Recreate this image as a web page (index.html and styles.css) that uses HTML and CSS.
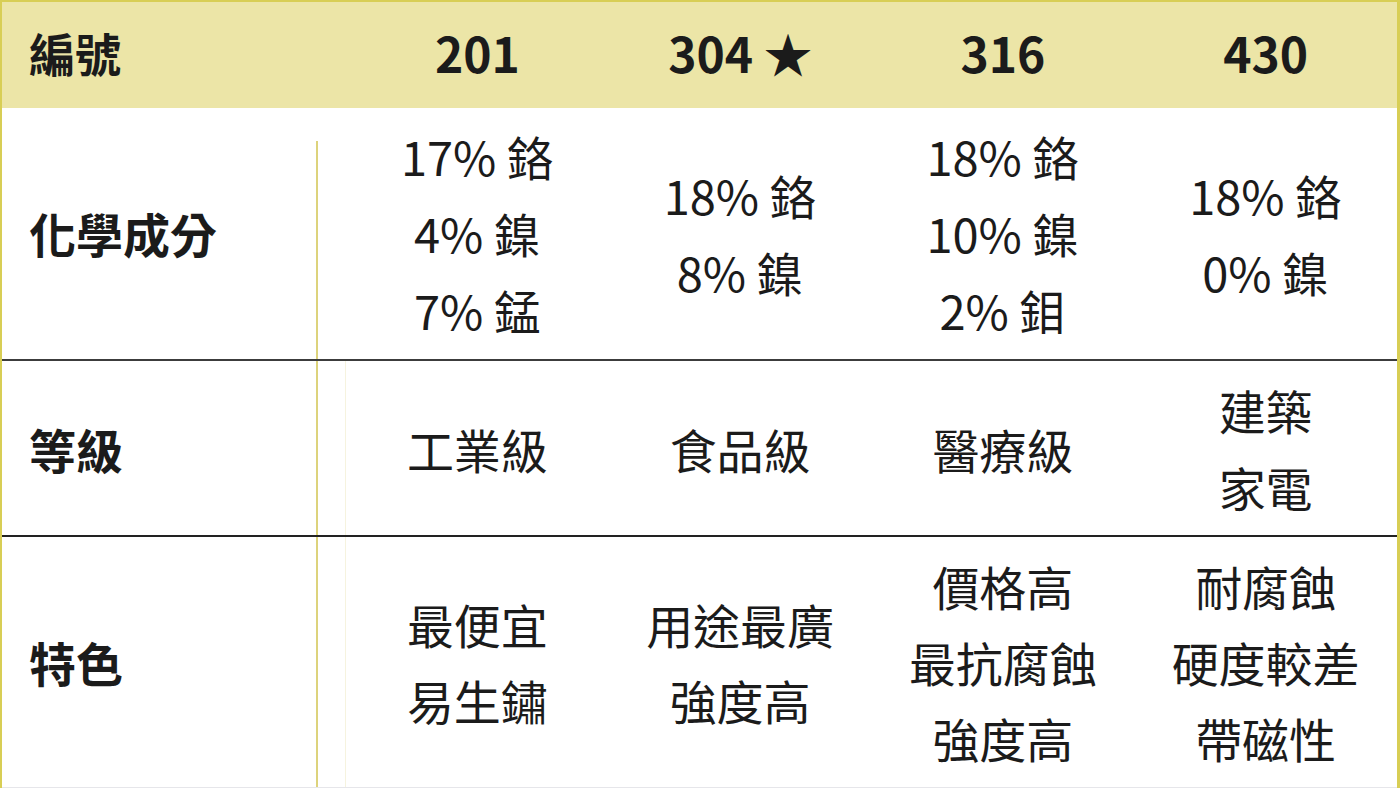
FILE: index.html
```html
<!DOCTYPE html>
<html lang="zh-Hant">
<head>
<meta charset="utf-8">
<title>不鏽鋼編號比較</title>
<link rel="stylesheet" href="styles.css">
</head>
<body>
<div class="sheet">
  <div class="row head">
    <div class="cell label">編號</div>
    <div class="gap"></div>
    <div class="cell">201</div>
    <div class="cell">304 ★</div>
    <div class="cell">316</div>
    <div class="cell">430</div>
  </div>
  <div class="row r1">
    <div class="cell label">化學成分</div>
    <div class="gap"></div>
    <div class="cell"><div>17% 鉻</div><div>4% 鎳</div><div>7% 錳</div></div>
    <div class="cell"><div>18% 鉻</div><div>8% 鎳</div></div>
    <div class="cell"><div>18% 鉻</div><div>10% 鎳</div><div>2% 鉬</div></div>
    <div class="cell"><div>18% 鉻</div><div>0% 鎳</div></div>
  </div>
  <div class="row r2">
    <div class="cell label">等級</div>
    <div class="gap"></div>
    <div class="cell"><div>工業級</div></div>
    <div class="cell"><div>食品級</div></div>
    <div class="cell"><div>醫療級</div></div>
    <div class="cell"><div>建築</div><div>家電</div></div>
  </div>
  <div class="row r3">
    <div class="cell label">特色</div>
    <div class="gap"></div>
    <div class="cell"><div>最便宜</div><div>易生鏽</div></div>
    <div class="cell"><div>用途最廣</div><div>強度高</div></div>
    <div class="cell"><div>價格高</div><div>最抗腐蝕</div><div>強度高</div></div>
    <div class="cell"><div>耐腐蝕</div><div>硬度較差</div><div>帶磁性</div></div>
  </div>
</div>
</body>
</html>
```
FILE: styles.css
```css
html, body {
  margin: 0;
  padding: 0;
  background: #ffffff;
}
body {
  width: 1400px;
  height: 788px;
  overflow: hidden;
  font-family: "Noto Sans CJK TC", "Noto Sans CJK SC", "Noto Sans", sans-serif;
  color: #1b1b1b;
}
.sheet {
  box-sizing: border-box;
  width: 1400px;
  height: 788px;
  border-top: 2px solid #d8ce55;
  border-left: 2px solid #d8ce55;
  border-right: 3px solid #d8ce55;
  display: flex;
  flex-direction: column;
}
.row {
  display: grid;
  grid-template-columns: 316px 28px repeat(4, 1fr);
  align-items: stretch;
}
.cell {
  display: flex;
  flex-direction: column;
  align-items: center;
  justify-content: center;
  text-align: center;
  font-size: 47px;
  line-height: 77px;
  font-weight: 400;
  white-space: nowrap;
}
.cell.label {
  align-items: flex-start;
  padding-left: 27px;
  font-weight: 700;
  background: linear-gradient(#ddd37c, #ddd37c) right bottom / 2px 100% no-repeat;
}
.gap {
  border-right: 1px solid #f6f3df;
}
.head {
  height: 106px;
  background: #ece5a7;
}
.head .cell {
  font-weight: 700;
  font-size: 48px;
  line-height: 1;
  padding-bottom: 6px;
}
.head .cell.label {
  font-size: 46px;
  background: none;
}
.head .gap {
  border-right: none;
}
.r1 {
  height: 251px;
  border-bottom: 2px solid #3c3c3c;
}
.r1 .cell {
  padding-bottom: 2px;
}
.r1 .cell.label {
  background-size: 2px calc(100% - 33px);
}
.r1 .gap {
  border-right: none;
}
.r2 {
  height: 174px;
  border-bottom: 2px solid #222222;
}
.r3 {
  flex: 1;
  border-bottom: 1px solid #e6e6ea;
}
.r3 .cell {
  line-height: 76px;
}
```
